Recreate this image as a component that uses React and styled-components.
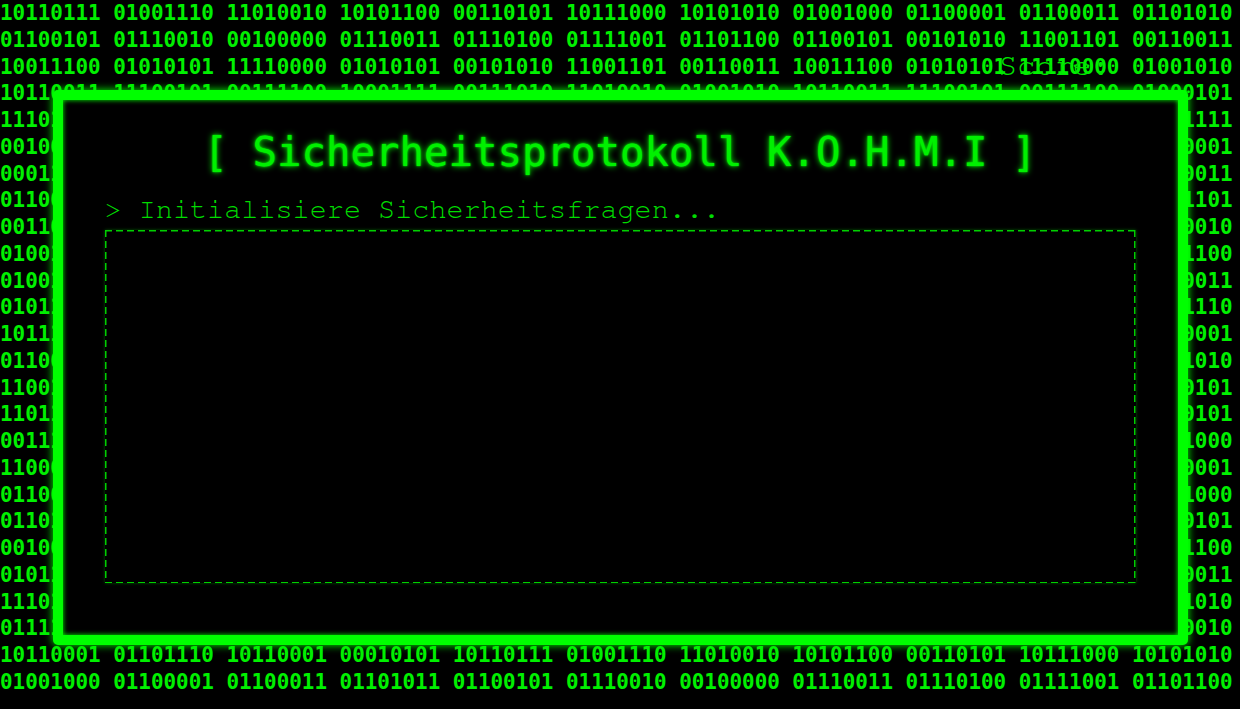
import React from "react";
import styled, { createGlobalStyle } from "styled-components";

const GlobalStyle = createGlobalStyle`
  html, body {
    margin: 0;
    padding: 0;
    background: #000;
    overflow: hidden;
  }
  #root {
    width: 1240px;
    height: 709px;
  }
`;

const courier = `FreeMono, "TeX Gyre Cursor", "Courier New", monospace`;

const Screen = styled.div`
  position: relative;
  width: 1240px;
  height: 709px;
  background: #000;
  overflow: hidden;
`;

const BinaryRain = styled.div`
  position: absolute;
  inset: 0;
  font-family: "DejaVu Sans Mono", monospace;
  font-weight: bold;
  font-size: 20.9px;
  line-height: 26.76px;
  color: #00f000;
  white-space: pre;
  overflow: hidden;
`;

const BinaryRow = styled.div`
  height: 26.76px;
`;

const Score = styled.div`
  position: absolute;
  top: 49px;
  right: 130px;
  font-family: ${courier};
  font-size: 31px;
  line-height: 34px;
  color: #00e600;
  z-index: 2;
`;

const Stage = styled.main`
  position: relative;
  z-index: 1;
  display: flex;
  justify-content: center;
  padding-top: 90px;
`;

const Terminal = styled.section`
  box-sizing: border-box;
  width: 1135px;
  height: 555px;
  background: #000;
  border: 10px solid #00ff00;
  border-radius: 5px;
  box-shadow: 0 0 8px #00ff00, inset 0 0 5px #00ff00;
  padding: 29px 42px 52px;
  display: flex;
  flex-direction: column;
`;

const Title = styled.h1`
  margin: 0;
  text-align: center;
  font-family: "DejaVu Sans Mono", monospace;
  font-weight: normal;
  font-size: 40.7px;
  line-height: 46.6px;
  color: #00f000;
  text-shadow: 0 0 6px #00ff00, 0 0 2px #00ff00;
`;

const Prompt = styled.p`
  margin: 18px 0 4px;
  font-family: ${courier};
  font-size: 28.5px;
  line-height: 32px;
  color: #00dc00;
`;

const dashH = "repeating-linear-gradient(90deg, #00d000 0 7px, transparent 7px 11px)";
const dashV = "repeating-linear-gradient(180deg, #00d000 0 7px, transparent 7px 11px)";

const QuestionBox = styled.div`
  flex: 1;
  background-image: ${dashH}, ${dashH}, ${dashV}, ${dashV};
  background-repeat: no-repeat;
  background-size: 100% 1.5px, 100% 1.5px, 1.5px 100%, 1.5px 100%;
  background-position: top left, bottom left, top left, top right;
  box-shadow: 0 0 3px rgba(0, 255, 0, 0.35);
`;

function makeRows() {
  const known = {
    0: "10110111 01001110 11010010 10101100 00110101 10111000 10101010 01001000 01100001 01100011 01101010",
    1: "01100101 01110010 00100000 01110011 01110100 01111001 01101100 01100101 00101010 11001101 00110011",
    2: "10011100 01010101 11110000 01010101 00101010 11001101 00110011 10011100 01010101 11110000 01001010",
    3: "10110011 11100101 00111100 10001111 00111010 11010010 01001010 10110011 11100101 00111100 01000101",
    24: "10110001 01101110 10110001 00010101 10110111 01001110 11010010 10101100 00110101 10111000 10101010",
    25: "01001000 01100001 01100011 01101011 01100101 01110010 00100000 01110011 01110100 01111001 01101100",
  };
  const left = ["1110", "0010", "0001", "0110", "0011", "0100", "0100", "0101", "1011", "0110", "1100", "1101", "0011", "1100", "0110", "0110", "0010", "0101", "1110", "0111"];
  const right = ["1111", "0001", "0011", "1101", "0010", "1100", "0011", "1110", "0001", "1010", "0101", "0101", "1000", "0001", "1000", "0101", "1100", "0011", "1010", "0010"];
  let seed = 1337;
  const rnd = () => {
    seed = (seed * 1103515245 + 12345) % 2147483648;
    return seed;
  };
  const bits = (n) => {
    let s = "";
    for (let i = 0; i < n; i++) s += (rnd() >> 8) & 1 ? "1" : "0";
    return s;
  };
  const rows = [];
  for (let r = 0; r < 26; r++) {
    if (known[r]) {
      rows.push(known[r]);
      continue;
    }
    const k = r - 4;
    const groups = [left[k] + bits(4)];
    for (let g = 0; g < 9; g++) groups.push(bits(8));
    groups.push(bits(4) + right[k]);
    rows.push(groups.join(" "));
  }
  return rows;
}

const rows = makeRows();

export default function App() {
  return (
    <>
      <GlobalStyle />
      <Screen>
        <BinaryRain aria-hidden="true">
          {rows.map((row, i) => (
            <BinaryRow key={i}>{row}</BinaryRow>
          ))}
        </BinaryRain>
        <Score>Score:</Score>
        <Stage>
          <Terminal>
            <Title>[ Sicherheitsprotokoll K.O.H.M.I ]</Title>
            <Prompt>&gt; Initialisiere Sicherheitsfragen...</Prompt>
            <QuestionBox />
          </Terminal>
        </Stage>
      </Screen>
    </>
  );
}
